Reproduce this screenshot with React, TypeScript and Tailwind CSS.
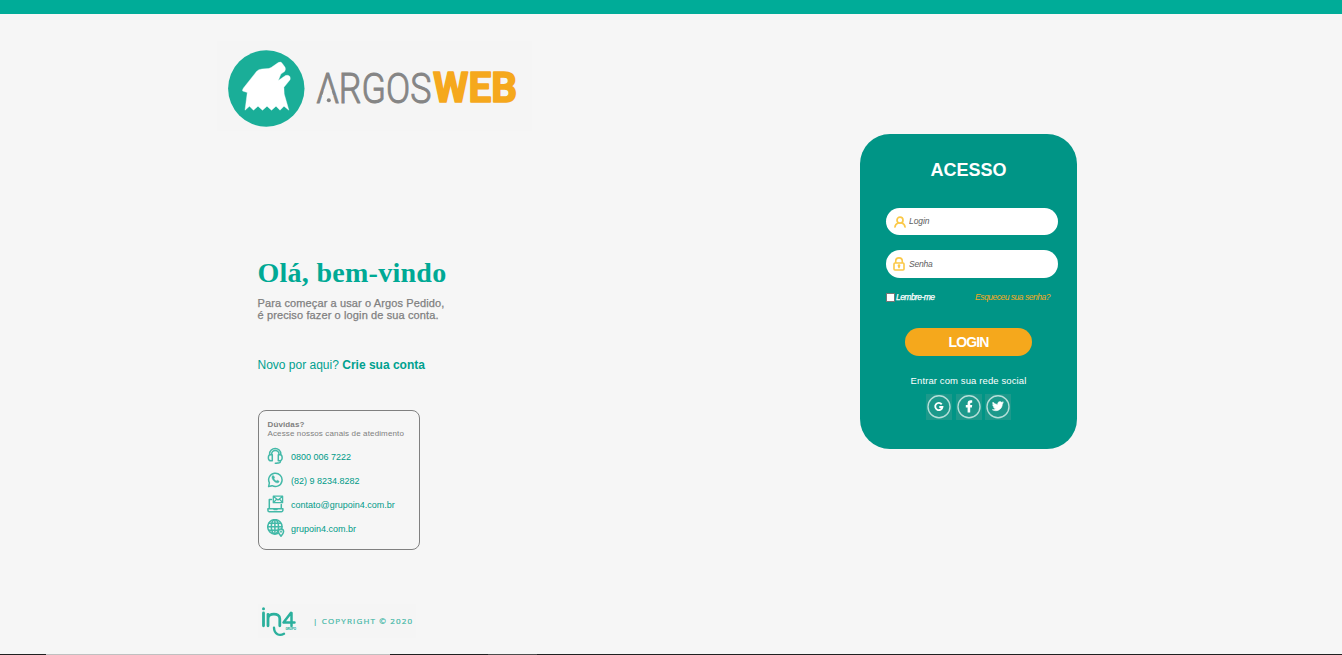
import React from "react";

const sans = "font-['Liberation_Sans',Arial,sans-serif]";

function ArgosLogo() {
  return (
    <svg viewBox="217 41 315 90" className="block h-[90px] w-[315px] bg-[#f5f5f5]" role="img" aria-label="Argos Web">
      <circle cx="266.3" cy="88.5" r="38.2" fill="#1aae98" />
      <path
        fill="#fff"
        stroke="#fff"
        strokeWidth=".4"
        d="M242.6 91 Q242.4 89.500 243.500 88 L256.500 71.500 Q258.500 69.300 262 69 L268.500 68.500 Q270 68.300 271.500 67.300 L278.300 62.600 Q280.800 61.300 282.300 63.500 L285 67.200 Q286 69.500 284.500 71.600 L280.900 74 L278.300 80.600 L285.500 75.500 Q288 74.800 289.600 76.200 Q290.600 77.800 290 79.800 L283.900 87.300 L284.200 94 L288.900 110.200 L284 106.200 L280 110.200 L276 106.200 L271.500 110.200 L267 106.200 L262.500 110.200 L258 106.200 L253.500 110.200 L249.500 106.200 L245 110.200 L247.300 92.500 Z"
      />
      <g fontFamily="Roboto, 'Liberation Sans', sans-serif" fontSize="43">
        <text transform="translate(316.500 102.500) scale(.88 1)" fontWeight="300" fill="#858585" stroke="#858585" strokeWidth="1" textLength="130.500" lengthAdjust="spacingAndGlyphs">ARGOS</text>
        <path d="M324.4 89 H331 L333.300 96 H322.100 Z" fill="#f5f5f5" />
        <circle cx="328.8" cy="100.300" r="2" fill="#858585" />
        <text x="433" y="101.8" fontWeight="700" fontSize="42" fill="#f5a81c" stroke="#f5a81c" strokeWidth="1.6" strokeLinejoin="round" textLength="84" lengthAdjust="spacingAndGlyphs">WEB</text>
      </g>
    </svg>
  );
}

const iconProps = {
  viewBox: "0 0 18 18",
  className: "block size-[18px] shrink-0",
  fill: "none",
  stroke: "#43b9a8",
  strokeWidth: 1.5,
  strokeLinecap: "round" as const,
  strokeLinejoin: "round" as const,
};

function HeadsetIcon() {
  return (
    <svg {...iconProps}>
      <path d="M2.600 7.500V7a5.600 5.600 0 0 1 11.200 0v.5M4.600 7.200a3.700 3.700 0 0 1 7.400 0" />
      <path d="M5.300 7.800v6H4A2.500 2.500 0 0 1 1.400 11.300V10A2.300 2.300 0 0 1 3.700 7.800ZM11.300 7.800v6h1.300a2.500 2.500 0 0 0 2.500-2.500V10a2.300 2.300 0 0 0-2.300-2.200Z" />
      <path d="M13.500 13.800v.4a1.700 1.700 0 0 1-1.700 1.700H10M8.300 16.300h1.800" />
    </svg>
  );
}

function WhatsappIcon() {
  return (
    <svg {...iconProps}>
      <path d="m1.600 15.600.8-3.700a6.700 6.700 0 1 1 2.700 2.800Z" />
      <path fill="#43b9a8" strokeWidth=".5" d="M5.700 4.800c-1.200.9-1 2.500.5 4.500s3.800 3.300 5.400 2.100c.8-.7.5-1.300-.2-1.600l-1.200-.6-.9.800c-1-.4-1.900-1.300-2.300-2.300l.6-.9-.6-1.500c-.2-.6-.8-.8-1.300-.5Z" />
    </svg>
  );
}

function LaptopMailIcon() {
  return (
    <svg {...iconProps}>
      <path d="M4.500 4.500H2.300v9.200h12V9.500M.9 13.700h15v1.500a1.500 1.500 0 0 1-1.500 1.500h-12a1.500 1.500 0 0 1-1.500-1.500ZM7 14.500h3" />
      <path strokeWidth="1.300" d="M6.300 1.200h9.300v6.500H6.300ZM6.500 1.500 11 5l4.500-3.500M6.700 7.400l2.800-3.100M15.400 7.400l-2.800-3.100" />
    </svg>
  );
}

function GlobePinIcon() {
  return (
    <svg {...iconProps}>
      <circle cx="7.900" cy="7.800" r="7.200" />
      <ellipse cx="7.900" cy="7.800" rx="3.600" ry="7.200" />
      <path d="M7.900.8v14M.9 7.800h14M1.900 4.300h12M1.900 11.300h9" />
      <path fill="#f5f5f5" d="M14 17.200c-1.700-2-2.600-3.100-2.600-4.500a2.600 2.600 0 0 1 5.200 0c0 1.400-.9 2.500-2.600 4.500Z" />
      <circle cx="14" cy="12.600" r=".4" />
    </svg>
  );
}

function In4Logo() {
  return (
    <svg viewBox="258 604 158 34" className="block h-[34px] w-[158px] bg-[#f5f5f5]" role="img" aria-label="in4">
      <g fill="none" stroke="#2bb09d" strokeWidth="2.800" strokeLinecap="round" strokeLinejoin="round">
        <path d="M263.500 613v12.800M268 625.800v-11.500M268 618.800c0-6.300 11.800-6.300 11.800 0v7" />
        <path d="M291 612.800l-7.500 9.700h11M291.500 613v13" strokeWidth="2.500" />
        <path d="M274 627.800c.3 6.800 5.600 8.400 10 6" strokeWidth="2.400" />
      </g>
      <circle cx="263.500" cy="608.700" r="1.500" fill="#2bb09d" />
      <text x="285.500" y="629.700" fontFamily="Roboto, sans-serif" fontSize="3.400" fontWeight="700" fill="#2bb09d" textLength="10.500">GRUPO</text>
      <text x="313" y="624.200" fontFamily="'Open Sans', sans-serif" fontSize="8" fill="#42b7a6" stroke="#42b7a6" strokeWidth=".2" textLength="99" lengthAdjust="spacing">| COPYRIGHT © 2020</text>
    </svg>
  );
}

const contacts = [
  { Icon: HeadsetIcon, label: "0800 006 7222" },
  { Icon: WhatsappIcon, label: "(82) 9 8234.8282" },
  { Icon: LaptopMailIcon, label: "contato@grupoin4.com.br" },
  { Icon: GlobePinIcon, label: "grupoin4.com.br" },
];

function Welcome() {
  return (
    <section className="w-[315px] pt-[27px]">
      <ArgosLogo />
      <div className="pl-[41px]">
        <h1 className="mt-[126px] -ml-[0.5px] h-8 whitespace-nowrap font-['Liberation_Serif',serif] text-[28px] leading-8 font-bold tracking-[0.270px] text-[#00a995]">Olá, bem-vindo</h1>
        <p className="mt-2 -ml-[0.5px] whitespace-nowrap text-[11px] leading-3 tracking-[0.120px] text-[#808080] [-webkit-text-stroke:0.25px_#808080]">
          Para começar a usar o Argos Pedido,
          <br />é preciso fazer o login de sua conta.
        </p>
        <p className="mt-[37px] -ml-[0.5px] whitespace-nowrap text-[12px] leading-[14px] text-[#00a18f]">
          Novo por aqui? <a href="#" className="font-bold">Crie sua conta</a>
        </p>
        <div className="mt-[38px] h-[140px] w-[162px] rounded-lg border border-[#808080] px-2 pt-[9px] whitespace-nowrap">
          <p className="pl-[0.5px] text-[8px] leading-[9px] font-bold tracking-[0.120px] text-[#808080]">Dúvidas?</p>
          <p className="pl-[0.5px] text-[8px] leading-[9px] tracking-[0.130px] text-[#808080]">Acesse nossos canais de atedimento</p>
          <ul className="mt-[9px] flex flex-col gap-1.5">
            {contacts.map(({ Icon, label }) => (
              <li key={label} className="flex h-[18px] items-center gap-1.5 text-[9px] leading-4 text-[#009a88]">
                <Icon />
                <span className="pt-0.5">{label}</span>
              </li>
            ))}
          </ul>
        </div>
        <div className="mt-[54px]">
          <In4Logo />
        </div>
      </div>
    </section>
  );
}

function UserIcon() {
  return (
    <svg viewBox="0 0 12 12" className="block size-3 shrink-0" fill="none" stroke="#fbc847" strokeWidth="1.700" strokeLinecap="round">
      <circle cx="6" cy="4.200" r="3" />
      <path d="M1 11c.2-2.200 1.500-3.500 3.200-4M11 11c-.2-2.200-1.500-3.500-3.200-4" />
    </svg>
  );
}

function LockIcon() {
  return (
    <svg viewBox="0 0 12 14" className="block h-3.5 w-3 shrink-0" fill="none" stroke="#fbc847" strokeWidth="1.600" strokeLinejoin="round">
      <rect x="1" y="6" width="10" height="7" rx="1" />
      <path d="M2.700 6V4.200a3.300 3.300 0 0 1 6.600 0V6M6 8.300v2.900" />
      <circle cx="6" cy="8.700" r=".6" />
    </svg>
  );
}

function SocialButton({ label, children }: { label: string; children: React.ReactNode }) {
  return (
    <a href="#" aria-label={label} className="block h-[26px] w-[26px] bg-[#1c998b]">
      <svg viewBox="0 0 26 26" className="block size-full">
        <circle cx="13" cy="12.700" r="11" fill="none" stroke="#b5dfd9" strokeWidth="1.400" />
        {children}
      </svg>
    </a>
  );
}

function AccessCard() {
  return (
    <form className="mt-[120px] mr-[265px] flex h-[315px] w-[217px] flex-col rounded-[30px] bg-[#009586] whitespace-nowrap">
      <h2 className="mt-[26px] text-center text-[18px] leading-5 font-bold text-white">ACESSO</h2>
      <div className="mt-[28px] ml-[26px] flex h-[27px] w-[172px] items-center gap-[3px] rounded-full bg-white pl-2">
        <UserIcon />
        <input aria-label="Login" placeholder="Login" className="mb-0.5 h-5 w-36 text-[8.500px] tracking-[-0.100px] italic outline-none placeholder:text-[#606060]" />
      </div>
      <div className="mt-[15px] ml-[26px] flex h-7 w-[172px] items-center gap-1 rounded-full bg-white pl-[7px]">
        <LockIcon />
        <input aria-label="Senha" type="password" placeholder="Senha" className="h-5 w-36 text-[8.500px] tracking-[-0.200px] italic outline-none placeholder:text-[#606060]" />
      </div>
      <div className="mt-3.5 mr-[27px] ml-[26px] flex h-[10px] items-center justify-between text-[8.500px] leading-[10px] italic">
        <label className="flex items-center gap-px text-white [-webkit-text-stroke:0.25px_white]">
          <input type="checkbox" className="size-[9px] appearance-none border border-[#767676] bg-white" />
          <span className="tracking-[-0.550px]">Lembre-me</span>
        </label>
        <a href="#" className="tracking-[-0.480px] text-[#f5a81c]">Esqueceu sua senha?</a>
      </div>
      <button type="button" className="mt-[26px] ml-[45px] h-7 w-[127px] rounded-full bg-[#f5a81c] text-[14px] font-bold tracking-[-0.900px] text-white">LOGIN</button>
      <p className="mt-[19px] text-center text-[9.500px] leading-3 tracking-[0.110px] text-white">Entrar com sua rede social</p>
      <div className="mt-[7px] flex pl-[66px]">
        <SocialButton label="Google">
          <path d="M15.700 10.300a3.600 3.600 0 1 0 .7 2.700H13.300" fill="none" stroke="#fff" strokeWidth="1.900" />
        </SocialButton>
        <div className="ml-[4px]">
          <SocialButton label="Facebook">
            <path fill="#fff" d="M11.600 18.600v-5.100H9.800V11h1.800V9.600c0-2.200 1.100-3.300 3.100-3.300h1.500v2.500h-1c-.7 0-1 .3-1 .9V11h2l-.3 2.500h-1.700v5.100Z" />
          </SocialButton>
        </div>
        <div className="ml-[3px]">
          <SocialButton label="Twitter">
            <path fill="#fff" stroke="#fff" transform="translate(7.200 6.500) scale(.47)" d="M23.950 4.570a10 10 0 0 1-2.820.77 4.960 4.960 0 0 0 2.160-2.720c-.95.550-2 .95-3.130 1.180a4.920 4.920 0 0 0-8.380 4.480C7.690 8.090 4.070 6.130 1.640 3.160a4.820 4.820 0 0 0-.670 2.480c0 1.710.870 3.210 2.190 4.090a4.900 4.900 0 0 1-2.230-.610v.060a4.920 4.920 0 0 0 3.950 4.830 5 5 0 0 1-2.210.080 4.940 4.940 0 0 0 4.600 3.420A9.870 9.870 0 0 1 0 19.540a14 14 0 0 0 7.550 2.210c9.050 0 14-7.500 14-13.980 0-.21 0-.42-.020-.63a9.940 9.940 0 0 0 2.420-2.570Z" />
          </SocialButton>
        </div>
      </div>
    </form>
  );
}

export default function App() {
  return (
    <div className={`flex h-[655px] w-full flex-col overflow-hidden bg-[#f6f6f6] ${sans}`}>
      <header className="h-3.5 shrink-0 bg-[#00ac98]" />
      <main className="flex h-[640px] shrink-0 items-start justify-between pl-[217px]">
        <Welcome />
        <AccessCard />
      </main>
      <footer className="flex h-px shrink-0 bg-[#202020]">
        <div className="ml-[46px] w-[344px] bg-[#c0c0c0]" />
        <div className="ml-[98px] w-[49px] bg-[#4c4c4c]" />
      </footer>
    </div>
  );
}
